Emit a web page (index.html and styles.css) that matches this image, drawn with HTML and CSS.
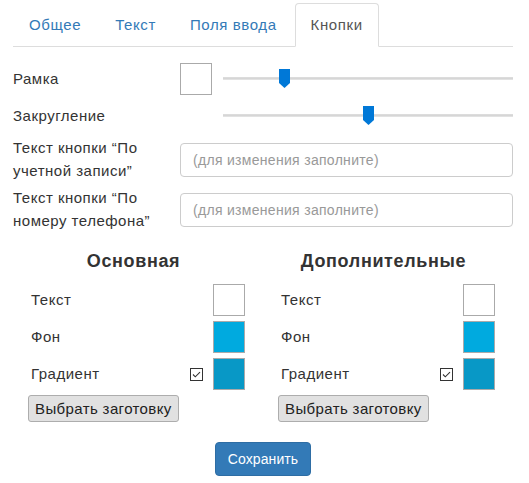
FILE: index.html
```html
<!DOCTYPE html>
<html lang="ru">
<head>
<meta charset="utf-8">
<title>Кнопки</title>
<link rel="stylesheet" href="styles.css">
</head>
<body>
<div class="page">
  <ul class="tabs">
    <li><a href="#">Общее</a></li>
    <li><a href="#">Текст</a></li>
    <li><a href="#">Поля ввода</a></li>
    <li class="active"><a href="#">Кнопки</a></li>
  </ul>

  <div class="form">
    <div class="row">
      <div class="label">Рамка</div>
      <span class="swatch swatch-white"></span>
      <div class="slider">
        <div class="track"></div>
        <svg class="thumb" style="left: calc((100% - 11px) * 0.2)" width="11" height="19" viewBox="0 0 11 19"><path d="M0 0H11V14L5.5 19L0 14Z" fill="#0078d7"/></svg>
      </div>
    </div>
    <div class="row">
      <div class="label">Закругление</div>
      <div class="slider">
        <div class="track"></div>
        <svg class="thumb" style="left: calc((100% - 11px) * 0.5)" width="11" height="19" viewBox="0 0 11 19"><path d="M0 0H11V14L5.5 19L0 14Z" fill="#0078d7"/></svg>
      </div>
    </div>
    <div class="row">
      <div class="label">Текст кнопки “По учетной записи”</div>
      <input class="field" type="text" placeholder="(для изменения заполните)">
    </div>
    <div class="row">
      <div class="label">Текст кнопки “По номеру телефона”</div>
      <input class="field" type="text" placeholder="(для изменения заполните)">
    </div>
  </div>

  <div class="cols">
    <div class="col">
      <h3 class="col-title">Основная</h3>
      <div class="col-row"><span class="col-label">Текст</span><span class="swatch swatch-white"></span></div>
      <div class="col-row"><span class="col-label">Фон</span><span class="swatch swatch-blue"></span></div>
      <div class="col-row"><span class="col-label">Градиент</span>
        <svg class="check" width="13" height="13" viewBox="0 0 13 13"><rect x="0.5" y="0.5" width="12" height="12" fill="#fff" stroke="#333"/><path d="M3 6.5L5.3 8.8L10 4.2" fill="none" stroke="#333" stroke-width="1.1"/></svg>
        <span class="swatch swatch-dark"></span></div>
      <button class="preset" type="button">Выбрать заготовку</button>
    </div>
    <div class="col">
      <h3 class="col-title">Дополнительные</h3>
      <div class="col-row"><span class="col-label">Текст</span><span class="swatch swatch-white"></span></div>
      <div class="col-row"><span class="col-label">Фон</span><span class="swatch swatch-blue"></span></div>
      <div class="col-row"><span class="col-label">Градиент</span>
        <svg class="check" width="13" height="13" viewBox="0 0 13 13"><rect x="0.5" y="0.5" width="12" height="12" fill="#fff" stroke="#333"/><path d="M3 6.5L5.3 8.8L10 4.2" fill="none" stroke="#333" stroke-width="1.1"/></svg>
        <span class="swatch swatch-dark"></span></div>
      <button class="preset" type="button">Выбрать заготовку</button>
    </div>
  </div>

  <button class="save" type="button">Сохранить</button>
</div>
</body>
</html>
```
FILE: styles.css
```css
* { box-sizing: border-box; }

body {
  margin: 0;
  background: #fff;
  color: #333;
  font-family: "Liberation Sans", Arial, Helvetica, sans-serif;
  font-size: 15px;
  line-height: 1.5;
  letter-spacing: 0.5px;
}

.page {
  width: 500px;
  margin-left: 13px;
}

/* Tabs */
.tabs {
  display: flex;
  list-style: none;
  margin: 3px 0 0;
  padding: 0;
  border-bottom: 1px solid #ddd;
}
.tabs li { margin-bottom: -1px; }
.tabs a {
  display: block;
  margin-right: 2px;
  padding: 10px 15px;
  border: 1px solid transparent;
  border-radius: 4px 4px 0 0;
  color: #337ab7;
  text-decoration: none;
  line-height: 22px;
  letter-spacing: 0.6px;
}
.tabs .active a {
  color: #555;
  background: #fff;
  border-color: #ddd #ddd transparent;
}

/* Form rows */
.form {
  margin-top: 16px;
  display: flex;
  flex-direction: column;
  gap: 5px;
}
.row {
  display: grid;
  grid-template-columns: 167px 43px 1fr;
  align-items: center;
  min-height: 32px;
}
.label {
  grid-column: 1;
  line-height: 22.5px;
}
.swatch {
  display: block;
  width: 32px;
  height: 32px;
  border: 1px solid #aaa;
  background: #fff;
}
.swatch-blue { background: #00aadf; }
.swatch-dark { background: #0898c6; }

.slider {
  grid-column: 3;
  position: relative;
  height: 32px;
}
.track {
  position: absolute;
  left: 0;
  right: 0;
  top: 14px;
  height: 3px;
  background: #d6d6d6;
  border-top: 1px solid #dcdcdc;
  border-bottom: 1px solid #e2e2e2;
}
.thumb {
  position: absolute;
  top: 6px;
  display: block;
}

.field {
  grid-column: 2 / 4;
  width: 100%;
  height: 34px;
  padding: 6px 12px;
  border: 1px solid #ccc;
  border-radius: 4px;
  font-family: inherit;
  font-size: 14px;
  letter-spacing: 0.3px;
  color: #555;
}
.field::placeholder { color: #999; }

/* Columns */
.cols {
  display: grid;
  grid-template-columns: 1fr 1fr;
  margin-top: 19px;
}
.col { padding: 0 18px; }
.col-title {
  margin: 0 0 13px;
  padding-right: 9px;
  text-align: center;
  font-size: 18px;
  line-height: 20px;
  font-weight: bold;
  letter-spacing: 0.65px;
}
.col-row {
  display: flex;
  align-items: center;
  height: 32px;
  margin-bottom: 5px;
}
.col-label { flex: 1; }
.check {
  display: block;
  margin-right: 10px;
}
.preset {
  display: block;
  margin-left: -3px;
  height: 27px;
  padding: 0 6px;
  border: 1px solid #adadad;
  border-radius: 3px;
  background: #e1e1e1;
  color: #222;
  font-family: inherit;
  font-size: 15px;
  letter-spacing: 0.38px;
}

.save {
  display: block;
  margin: 20px auto 0;
  padding: 6px 12px;
  border: 1px solid #2e6da4;
  border-radius: 4px;
  background: #337ab7;
  color: #fff;
  font-family: inherit;
  font-size: 14px;
  line-height: 20px;
  letter-spacing: 0.1px;
}
```
